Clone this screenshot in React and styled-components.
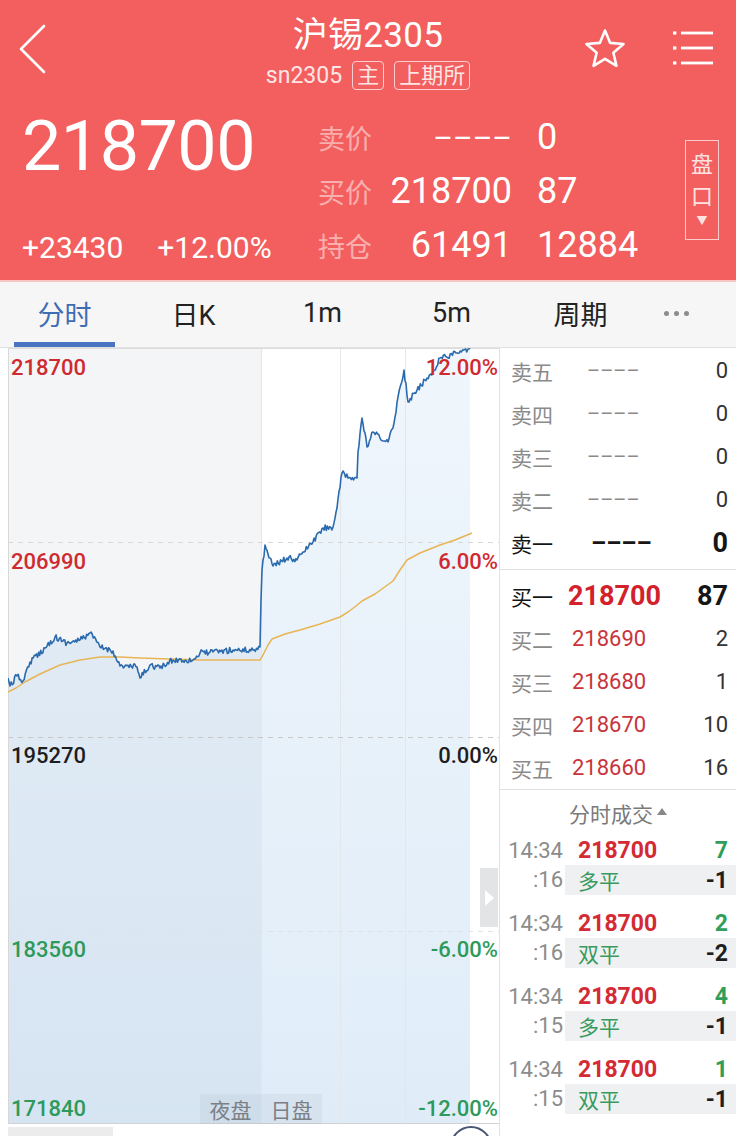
import React from 'react';
import styled, { createGlobalStyle } from 'styled-components';

const GlobalStyle = createGlobalStyle`
  html, body { margin: 0; padding: 0; background: #fff; }
  body {
    font-family: Roboto, "Noto Sans CJK SC", sans-serif;
    width: 736px; height: 1136px; overflow: hidden;
  }
  * { box-sizing: border-box; }
`;

const Page = styled.div`
  width: 736px; height: 1136px; overflow: hidden; background: #fff;
  display: flex; flex-direction: column;
`;

/* ---------- header ---------- */
const Header = styled.header`
  flex-shrink: 0;
  background: #f25f5e; color: #fff; height: 282px;
  border-bottom: 2px solid #f8c6c3;
  display: flex; flex-direction: column;
`;
const TopBar = styled.div`
  height: 100px; display: grid; grid-template-columns: 1fr auto 1fr;
`;
const BackBtn = styled.div`
  padding: 24px 0 0 18px;
`;
const TitleBlock = styled.div`
  display: flex; flex-direction: column; align-items: center; gap: 3px; padding-top: 15px;
`;
const Title = styled.div`
  font-size: 35px; line-height: 42px; color: #fff; letter-spacing: 0.3px;
`;
const SubLine = styled.div`
  display: flex; align-items: center; gap: 10px; height: 30px; color: #fde6e5; font-size: 23px;
`;
const Badge = styled.span`
  border: 1.5px solid rgba(255, 226, 224, 0.85); border-radius: 4px;
  font-size: 22px; line-height: 27px; padding: 0 4px; color: #fde6e5;
`;
const Actions = styled.div`
  display: flex; justify-content: flex-end; gap: 44px; padding: 26px 21px 0 0;
`;

const QuoteRow = styled.div`
  flex: 1; display: flex;
`;
const PriceCol = styled.div`
  width: 318px; display: flex; flex-direction: column; justify-content: space-between;
  padding: 6px 0 12px 22px;
`;
const BigPrice = styled.div`
  font-size: 70px; line-height: 80px; color: #fff; letter-spacing: -0.5px;
`;
const ChangeLine = styled.div`
  display: flex; gap: 34px; font-size: 30px; line-height: 40px; color: #fff;
`;
const QuoteTable = styled.div`
  padding-top: 10px; display: grid; grid-template-columns: 54px 140px auto;
  grid-auto-rows: 54px; align-items: center; column-gap: 25px; align-content: start;
  margin-left: -25px;
`;
const QLabel = styled.span`
  font-size: 27px; color: rgba(255, 255, 255, 0.5); margin-left: 25px; margin-right: -25px;
`;
const QValue = styled.span`
  font-size: ${p => (p.$dash ? '30px' : '36px')}; color: #fff;
  text-align: ${p => (p.$right ? 'right' : 'left')};
`;
const PanBtn = styled.div`
  margin: 40px 17px 0 auto; width: 34px; height: 100px;
  border: 1.5px solid rgba(255, 224, 222, 0.85);
  display: flex; flex-direction: column; align-items: center; justify-content: center;
  color: #fde3e2; font-size: 22px; line-height: 32px;
`;
const Tri = styled.span`
  font-size: 11px; line-height: 18px;
`;

/* ---------- tabs ---------- */
const TabBar = styled.nav`
  flex-shrink: 0;
  height: 66px; background: #f6f6f6; border-bottom: 1px solid #e1e1e1; display: flex;
`;
const Tab = styled.div`
  position: relative; width: ${p => (p.$narrow ? '62px' : '129px')};
  display: flex; align-items: center; justify-content: center; padding-bottom: 3px;
  font-size: 27px; color: ${p => (p.$active ? '#3e6db3' : '#222')};
  &::after {
    content: ''; display: ${p => (p.$active ? 'block' : 'none')};
    position: absolute; left: 14px; right: 14px; bottom: 0; height: 5px; background: #4a73c2;
  }
`;
const Dots = styled.div`
  display: flex; gap: 5px;
  span { width: 5px; height: 5px; border-radius: 50%; background: #8c8c8c; }
`;

/* ---------- main ---------- */
const Main = styled.div`
  flex: 1; min-height: 0; overflow: hidden; display: flex; padding-left: 8px;
`;
const ChartCol = styled.div`
  width: 491px; display: flex; flex-direction: column; overflow: hidden;
`;
const ChartBox = styled.div`
  position: relative; height: 776px; flex-shrink: 0;
`;
const AxisOverlay = styled.div`
  position: absolute; inset: 0; display: grid; grid-template-rows: repeat(4, 194px);
  pointer-events: none;
`;
const AxisRow = styled.div`
  grid-row: ${p => p.$row}; grid-column: 1;
  align-self: ${p => (p.$bottom ? 'end' : 'start')};
  display: flex; justify-content: space-between; padding: 0 1px 0 3px;
  font-size: 22px; font-weight: 500; line-height: ${p => (p.$bottom ? '30px' : '40px')};
  color: ${p => p.$color};
`;
const Session = styled.div`
  position: absolute; left: 192px; bottom: 0; display: flex;
`;
const SessionTag = styled.span`
  width: 61px; height: 30px; display: flex; align-items: center; justify-content: center;
  font-size: 21px; color: #7b7f86; background: rgba(120, 130, 140, 0.08);
`;
const Handle = styled.div`
  position: absolute; right: 1px; top: 520px; width: 18px; height: 59px;
  background: #e3e4e6; display: flex; align-items: center; justify-content: center;
  &::before {
    content: ''; border-left: 9px solid #fff; border-top: 8px solid transparent; border-bottom: 8px solid transparent;
  }
`;
const BottomStrip = styled.div`
  height: 12px; flex-shrink: 0; overflow: hidden;
  display: flex; justify-content: space-between; align-items: flex-start; padding: 3px 7px 0 0;
`;
const GrayBlock = styled.div`
  width: 105px; height: 12px; background: #ececec;
`;
const Circle = styled.div`
  width: 42px; height: 42px; border-radius: 50%; border: 2px solid #4b5675; margin-top: -1px;
  flex-shrink: 0;
`;

/* ---------- order book ---------- */
const Panel = styled.aside`
  width: 237px; border-left: 1px solid #e2e2e2; display: flex; flex-direction: column;
`;
const BookGroup = styled.div`
  padding: ${p => (p.$first ? '1px 0 5px' : '4px 0 0')};
  border-bottom: 1px solid #e0e0e0;
`;
const BookRow = styled.div`
  display: grid; grid-template-columns: 56px 1fr auto; align-items: center; height: 43px;
  padding: 0 8px 0 11px;
`;
const BookLabel = styled.span`
  font-size: 21px; color: ${p => (p.$strong ? '#161616' : '#8a8a8a')};
`;
const BookPrice = styled.span`
  font-size: ${p => (p.$dash ? (p.$strong ? '24px' : '20px') : p.$strong ? '27px' : '22px')};
  font-weight: ${p => (p.$strong ? 700 : 400)};
  color: ${p => (p.$dash ? (p.$strong ? '#161616' : '#8a8a8a') : p.$strong ? '#d3212c' : '#c8343c')};
  padding-left: ${p => (p.$dash ? (p.$strong ? 24 : 20) : p.$strong ? 1 : 5)}px;
`;
const BookQty = styled.span`
  font-size: ${p => (p.$strong ? '27px' : '22px')};
  font-weight: ${p => (p.$strong ? 700 : 400)};
  color: ${p => (p.$strong ? '#161616' : '#333')};
  text-align: right;
`;
const TradeHead = styled.div`
  height: 46px; display: flex; align-items: center; justify-content: center; gap: 4px;
  font-size: 21px; color: #7a7a7a;
  &::after {
    content: ''; border-bottom: 7px solid #888; border-left: 5px solid transparent; border-right: 5px solid transparent;
    margin-bottom: 4px;
  }
`;
const TradeList = styled.div`
  display: flex; flex-direction: column; gap: 15px;
`;
const TradeLine = styled.div`
  display: grid; grid-template-columns: 65px 1fr; height: 29px; align-items: stretch;
`;
const TradeTime = styled.span`
  font-size: 22px; color: #8c8c8c; text-align: right; padding-right: 2px; line-height: 29px;
`;
const TradeBody = styled.div`
  display: flex; justify-content: space-between; align-items: center; padding: 0 8px 0 13px;
  background: ${p => (p.$shade ? '#eef0f2' : 'transparent')};
`;
const TradeText = styled.span`
  font-size: ${p => (p.$bold ? '23px' : '21px')};
  font-weight: ${p => (p.$bold ? 700 : 400)};
  color: ${p => p.$color};
`;

/* ---------- icons ---------- */
const Chevron = () => (
  <svg width="30" height="50" viewBox="0 0 30 50">
    <path d="M26 2 L3 25 L26 48" fill="none" stroke="#fff" strokeWidth="2.6" strokeLinecap="round" strokeLinejoin="round" />
  </svg>
);

const starPoints = (() => {
  const pts = [];
  for (let k = 0; k < 10; k++) {
    const a = (-90 + k * 36) * Math.PI / 180;
    const r = k % 2 === 0 ? 19.5 : 8.8;
    pts.push(`${(22 + r * Math.cos(a)).toFixed(2)},${(24 + r * Math.sin(a)).toFixed(2)}`);
  }
  return pts.join(' ');
})();

const StarIcon = () => (
  <svg width="44" height="44" viewBox="0 0 44 44">
    <polygon points={starPoints} fill="none" stroke="#fff" strokeWidth="2.6" strokeLinejoin="round" />
  </svg>
);

const MenuIcon = () => (
  <svg width="44" height="44" viewBox="0 0 44 44">
    {[7, 22, 37].map(y => (
      <g key={y}>
        <rect x="2" y={y - 1.6} width="3.4" height="3.2" fill="#fff" />
        <line x1="10" y1={y} x2="42" y2={y} stroke="#fff" strokeWidth="2.8" />
      </g>
    ))}
  </svg>
);

/* ---------- chart ---------- */
const W = 491;
const H = 776;

function makeRng(seed) {
  let s = seed;
  return () => {
    s = (s * 16807) % 2147483647;
    return (s - 1) / 2147483646;
  };
}

const priceKeys = [[8,678],[10,686],[17,676],[23,681],[30,662],[45,648],[55,637],[67,643],[80,640],[90,633],[100,647],[113,651],[120,666],[137,667],[140,678],[150,665],[160,668],[173,660],[193,660],[200,653],[213,652],[233,650],[253,650],[260,647],[261,600],[262,570],[265,545],[270,558],[273,566],[287,558],[297,560],[303,552],[313,542],[323,528],[333,527],[337,508],[342,473],[348,478],[357,478],[358,452],[362,418],[367,447],[373,432],[380,438],[388,442],[393,428],[398,397],[404,370],[408,402],[417,390],[427,378],[433,372],[440,358],[457,353],[470,348]];

const avgKeys = [[8,692],[16,688],[25,682],[40,674],[60,665],[80,660],[100,657],[120,657],[140,658],[170,659],[200,660],[230,660],[260,660],[263,655],[268,645],[272,639],[285,634],[300,630],[320,624],[340,617],[348,612],[356,606],[362,601],[375,594],[393,581],[400,570],[407,560],[420,553],[440,545],[455,540],[472,533]];

function buildPrice() {
  const rnd = makeRng(12345);
  const pts = [];
  for (let i = 0; i < priceKeys.length - 1; i++) {
    const [x1, y1] = priceKeys[i];
    const [x2, y2] = priceKeys[i + 1];
    const n = Math.max(1, Math.round((x2 - x1) / 1.1));
    for (let j = 0; j < n; j++) {
      const t = j / n;
      const x = x1 + (x2 - x1) * t;
      let y = y1 + (y2 - y1) * t;
      if (j > 0 && x2 - x1 > 2) y += (rnd() - 0.5) * 6;
      pts.push([x - 8, Math.max(1, y - 348)]);
    }
  }
  const last = priceKeys[priceKeys.length - 1];
  pts.push([last[0] - 8, last[1] - 348]);
  return pts;
}

const pricePts = buildPrice();
const priceD = pricePts.map((p, i) => `${i ? 'L' : 'M'}${p[0].toFixed(1)} ${p[1].toFixed(1)}`).join(' ');
const areaD = `${priceD} L${pricePts[pricePts.length - 1][0].toFixed(1)} ${H} L0 ${H} Z`;
const avgD = avgKeys.map((p, i) => `${i ? 'L' : 'M'}${p[0] - 8} ${p[1] - 348}`).join(' ');

const Chart = () => (
  <svg width={W} height={H} viewBox={`0 0 ${W} ${H}`} style={{ display: 'block' }}>
    <defs>
      <linearGradient id="fillG" x1="0" y1="0" x2="0" y2="1">
        <stop offset="0" stopColor="#9cc6ec" stopOpacity="0.16" />
        <stop offset="1" stopColor="#8dbbe6" stopOpacity="0.28" />
      </linearGradient>
    </defs>
    <rect x="0" y="0" width={W} height={H} fill="#fff" />
    <rect x="0" y="0" width="253" height={H} fill="#f3f5f7" />
    <path d={areaD} fill="url(#fillG)" />
    {[253, 332, 397].map(x => (
      <line key={x} x1={x + 0.5} y1="0" x2={x + 0.5} y2={H} stroke="#e4e7ea" strokeWidth="1" />
    ))}
    <line x1="0" y1="0.5" x2={W} y2="0.5" stroke="#dcdcdc" />
    <line x1="0" y1="194.5" x2={W} y2="194.5" stroke="#d8d8d8" strokeDasharray="5 5" />
    <line x1="0" y1="389.5" x2={W} y2="389.5" stroke="#c8c8c8" strokeDasharray="5 5" />
    <line x1="0" y1="583.5" x2={W} y2="583.5" stroke="#dde2e6" strokeDasharray="5 5" />
    <line x1="0" y1={H - 0.5} x2={W} y2={H - 0.5} stroke="#cfd3d6" />
    <line x1="0.5" y1="0" x2="0.5" y2={H} stroke="#d8d8d8" />
    <path d={avgD} fill="none" stroke="#e8b555" strokeWidth="1.5" strokeLinejoin="round" />
    <path d={priceD} fill="none" stroke="#2b6aad" strokeWidth="1.6" strokeLinejoin="round" />
  </svg>
);

const axis = [
  { l: '218700', r: '12.00%', c: '#cf2a30', row: 1 },
  { l: '206990', r: '6.00%', c: '#cf2a30', row: 2 },
  { l: '195270', r: '0.00%', c: '#1e1e1e', row: 3 },
  { l: '183560', r: '-6.00%', c: '#2d9a5b', row: 4 },
  { l: '171840', r: '-12.00%', c: '#2d9a5b', row: 4, bottom: true },
];

const asks = [
  { l: '卖五', q: '0' },
  { l: '卖四', q: '0' },
  { l: '卖三', q: '0' },
  { l: '卖二', q: '0' },
  { l: '卖一', q: '0', strong: true },
];
const bids = [
  { l: '买一', p: '218700', q: '87', strong: true },
  { l: '买二', p: '218690', q: '2' },
  { l: '买三', p: '218680', q: '1' },
  { l: '买四', p: '218670', q: '10' },
  { l: '买五', p: '218660', q: '16' },
];
const trades = [
  { s: ':16', v: '7', k: '多平', d: '-1' },
  { s: ':16', v: '2', k: '双平', d: '-2' },
  { s: ':15', v: '4', k: '多平', d: '-1' },
  { s: ':15', v: '1', k: '双平', d: '-1' },
];

const DASH = '\u2013\u2013\u2013\u2013';

export default function App() {
  return (
    <Page>
      <GlobalStyle />
      <Header>
        <TopBar>
          <BackBtn><Chevron /></BackBtn>
          <TitleBlock>
            <Title>沪锡2305</Title>
            <SubLine>
              <span>sn2305</span>
              <Badge>主</Badge>
              <Badge>上期所</Badge>
            </SubLine>
          </TitleBlock>
          <Actions>
            <StarIcon />
            <MenuIcon />
          </Actions>
        </TopBar>
        <QuoteRow>
          <PriceCol>
            <BigPrice>218700</BigPrice>
            <ChangeLine>
              <span>+23430</span>
              <span>+12.00%</span>
            </ChangeLine>
          </PriceCol>
          <QuoteTable>
            <QLabel>卖价</QLabel>
            <QValue $right $dash>{DASH}</QValue>
            <QValue>0</QValue>
            <QLabel>买价</QLabel>
            <QValue $right>218700</QValue>
            <QValue>87</QValue>
            <QLabel>持仓</QLabel>
            <QValue $right>61491</QValue>
            <QValue>12884</QValue>
          </QuoteTable>
          <PanBtn>
            <span>盘</span>
            <span>口</span>
            <Tri>▼</Tri>
          </PanBtn>
        </QuoteRow>
      </Header>

      <TabBar>
        <Tab $active>分时</Tab>
        <Tab>日K</Tab>
        <Tab>1m</Tab>
        <Tab>5m</Tab>
        <Tab>周期</Tab>
        <Tab $narrow><Dots><span /><span /><span /></Dots></Tab>
      </TabBar>

      <Main>
        <ChartCol>
          <ChartBox>
            <Chart />
            <AxisOverlay>
              {axis.map(a => (
                <AxisRow key={a.l} $row={a.row} $bottom={a.bottom} $color={a.c}>
                  <span>{a.l}</span>
                  <span>{a.r}</span>
                </AxisRow>
              ))}
            </AxisOverlay>
            <Session>
              <SessionTag>夜盘</SessionTag>
              <SessionTag>日盘</SessionTag>
            </Session>
            <Handle />
          </ChartBox>
          <BottomStrip>
            <GrayBlock />
            <Circle />
          </BottomStrip>
        </ChartCol>

        <Panel>
          <BookGroup $first>
            {asks.map(r => (
              <BookRow key={r.l}>
                <BookLabel $strong={r.strong}>{r.l}</BookLabel>
                <BookPrice $dash $strong={r.strong}>{DASH}</BookPrice>
                <BookQty $strong={r.strong}>{r.q}</BookQty>
              </BookRow>
            ))}
          </BookGroup>
          <BookGroup>
            {bids.map(r => (
              <BookRow key={r.l}>
                <BookLabel $strong={r.strong}>{r.l}</BookLabel>
                <BookPrice $strong={r.strong}>{r.p}</BookPrice>
                <BookQty $strong={r.strong}>{r.q}</BookQty>
              </BookRow>
            ))}
          </BookGroup>
          <TradeHead>分时成交</TradeHead>
          <TradeList>
            {trades.map((t, i) => (
              <div key={i}>
                <TradeLine>
                  <TradeTime>14:34</TradeTime>
                  <TradeBody>
                    <TradeText $bold $color="#d42a33">218700</TradeText>
                    <TradeText $bold $color="#2f9e5a">{t.v}</TradeText>
                  </TradeBody>
                </TradeLine>
                <TradeLine>
                  <TradeTime>{t.s}</TradeTime>
                  <TradeBody $shade>
                    <TradeText $color="#3a9a5e">{t.k}</TradeText>
                    <TradeText $bold $color="#1e1e1e">{t.d}</TradeText>
                  </TradeBody>
                </TradeLine>
              </div>
            ))}
          </TradeList>
        </Panel>
      </Main>
    </Page>
  );
}
